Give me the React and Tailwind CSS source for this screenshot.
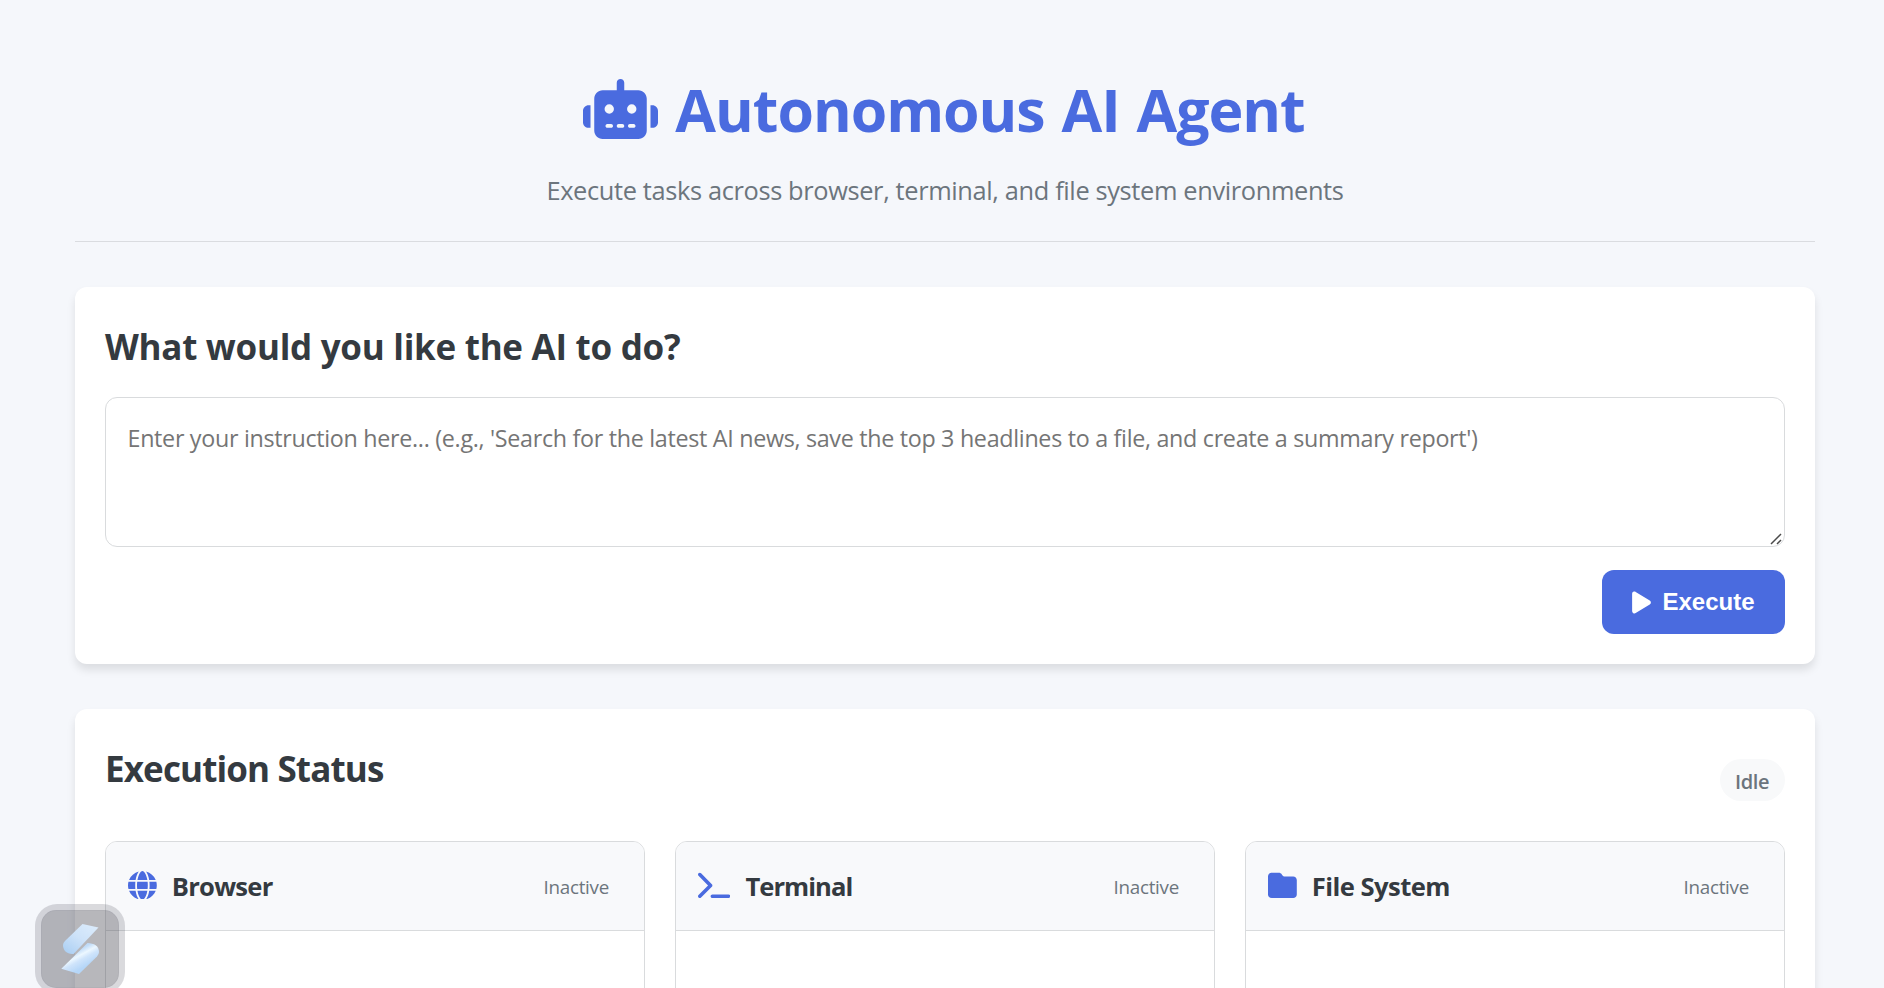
import { FaRobot, FaPlay, FaGlobe, FaTerminal, FaFolder } from 'react-icons/fa6';

const panels = [
  { title: 'Browser', Icon: FaGlobe, iconClass: 'w-[28.8px]', titleClass: 'tracking-[-0.75px]' },
  { title: 'Terminal', Icon: FaTerminal, iconClass: 'w-[32.4px]', titleClass: 'tracking-[-0.97px]' },
  { title: 'File System', Icon: FaFolder, iconClass: 'w-[28.8px]', titleClass: 'tracking-[-0.55px]' },
];

function Card({ className, children }) {
  return (
    <section className={`rounded-[12px] bg-white px-[30px] pt-[33px] shadow-[0_6px_9px_rgba(0,0,0,0.1)] ${className}`}>
      {children}
    </section>
  );
}

function Panel({ title, Icon, iconClass, titleClass }) {
  return (
    <article className="h-[450px] overflow-hidden rounded-[12px] border border-[#d9dbdd] bg-white">
      <header className="flex h-[89px] items-center border-b border-[#d9dbdd] bg-[#f8f9fb] pr-[35px] pl-[22px]">
        <Icon className={`mr-[15px] -mt-[2px] h-[28.8px] shrink-0 text-[#4a6bdf] ${iconClass}`} />
        <h3 className={`mt-px text-[25.6px] leading-[40px] font-bold ${titleClass}`}>{title}</h3>
        <span className="mt-[3px] ml-auto text-[18.8px] tracking-[-0.25px] text-[#6c757d]">Inactive</span>
      </header>
    </article>
  );
}

function AssistantBadge() {
  return (
    <div className="fixed top-[904px] left-[35px] size-[90px] rounded-[22px] bg-[rgba(70,72,85,0.2)] p-[6px]">
      <div className="size-[78px] rounded-[15px] border border-[rgba(60,60,75,0.05)] bg-[rgba(70,70,80,0.24)]">
        <svg viewBox="0 0 76 76" className="size-[76px]">
          <defs>
            <linearGradient id="upper" x1="0.9" y1="0" x2="0.1" y2="1">
              <stop offset="0" stopColor="#dcecfc" />
              <stop offset="0.5" stopColor="#cde2f9" />
              <stop offset="1" stopColor="#abcff3" />
            </linearGradient>
            <linearGradient id="lower" x1="0.35" y1="0.3" x2="0.65" y2="0.75">
              <stop offset="0" stopColor="#bfdbf8" />
              <stop offset="0.3" stopColor="#ecf7ff" />
              <stop offset="0.55" stopColor="#cfe4fb" />
              <stop offset="1" stopColor="#b5d6f8" />
            </linearGradient>
          </defs>
          <path d="M40.5 13 L56.5 16.5 L31.5 43 C25 43.5 21 39.5 21 34 Q21 32 23 30 Z" fill="url(#upper)" />
          <path d="M45.5 32 C52 32.2 57 35 57 41 Q57 43.5 55 45.5 L37 63 L19.3 57.8 Z" fill="url(#lower)" />
        </svg>
      </div>
    </div>
  );
}

export default function App() {
  return (
    <div className="h-[988px] overflow-hidden bg-[#f5f7fb] px-[75px] pr-[69px] font-['Open_Sans',sans-serif] text-[#343a40]">
      <header className="mx-auto flex h-[242px] flex-col items-center border-b border-[#dadce0] pt-[64px]">
        <h1 className="flex h-[90px] items-center pr-[2px] text-[59px] leading-[90px] font-bold tracking-[-1.02px] text-[#4a6bdf] [word-spacing:2.5px]">
          <FaRobot className="mr-[17px] h-[60px] w-[75px]" />
          Autonomous AI Agent
        </h1>
        <p className="mt-[16px] text-[25.4px] leading-[40px] tracking-[-0.365px] text-[#6c757d]">
          Execute tasks across browser, terminal, and file system environments
        </p>
      </header>

      <Card className="mt-[45px] h-[377px]">
        <h2 className="text-[35px] leading-[54px] font-bold tracking-[-0.28px]">What would you like the AI to do?</h2>
        <div className="relative mt-[23px] h-[150px]">
          <textarea
            className="block h-full w-full resize-none rounded-[12px] border border-[#d9dbdd] px-[21.5px] py-[22px] text-[23.3px] leading-9 tracking-[-0.305px] placeholder:text-[#757575]"
            placeholder="Enter your instruction here... (e.g., 'Search for the latest AI news, save the top 3 headlines to a file, and create a summary report')"
          />
          <svg viewBox="0 0 12 12" className="pointer-events-none absolute right-[3px] bottom-[2px] size-3 text-[#4a4a4a]">
            <path d="M1 11 L11 1 M7 11 L11 7" stroke="currentColor" strokeWidth="1.5" fill="none" />
          </svg>
        </div>
        <div className="mt-[23px] flex justify-end">
          <button className="flex h-16 w-[183px] items-center rounded-[12px] bg-[#4a6bdf] pl-[30px] font-['Liberation_Sans',sans-serif] text-[24px] font-bold text-white">
            <FaPlay className="mr-[11.5px] h-[25px] w-[19px]" />
            Execute
          </button>
        </div>
      </Card>

      <Card className="mt-[45px] h-[560px]">
        <div className="flex h-[99px] justify-between">
          <h2 className="text-[35px] leading-[54px] font-bold tracking-[-0.87px]">Execution Status</h2>
          <span className="mt-[17px] h-[42px] w-[65px] rounded-full bg-[#f8f9fa] pt-[2px] pl-[15px] text-[20px] leading-[42px] font-semibold tracking-[-0.4px] text-[#6c757d]">
            Idle
          </span>
        </div>
        <div className="grid grid-cols-3 gap-[30px]">
          {panels.map((panel) => (
            <Panel key={panel.title} {...panel} />
          ))}
        </div>
      </Card>

      <AssistantBadge />
    </div>
  );
}
